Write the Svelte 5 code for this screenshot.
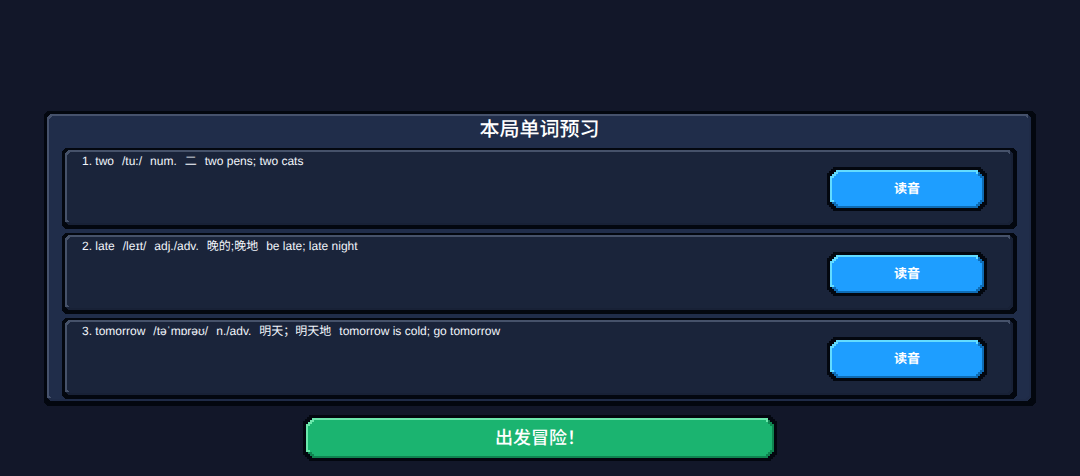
<script lang="ts">
  type Word = {
    word: string;
    ipa: string;
    pos: string;
    meaning: string;
    example: string;
  };

  let words: Word[] = [
    { word: 'two', ipa: '/tu:/', pos: 'num.', meaning: '二', example: 'two pens; two cats' },
    { word: 'late', ipa: '/leɪt/', pos: 'adj./adv.', meaning: '晚的;晚地', example: 'be late; late night' },
    { word: 'tomorrow', ipa: '/təˈmɒrəʊ/', pos: 'n./adv.', meaning: '明天；明天地', example: 'tomorrow is cold; go tomorrow' },
  ];

  let started = $state(false);

  function speak(word: string) {
    if (!('speechSynthesis' in window)) return;
    const utterance = new SpeechSynthesisUtterance(word);
    utterance.lang = 'en-US';
    window.speechSynthesis.speak(utterance);
  }
</script>

<main>
  <section class="frame panel pixel">
    <div class="edge pixel">
      <div class="face pixel">
        <h1>本局单词预习</h1>
        <ol>
          {#each words as item, i}
            <li class="frame row pixel">
              <div class="edge pixel">
                <div class="face pixel">
                  <p>
                    <span>{i + 1}. {item.word}</span>
                    <span>{item.ipa}</span>
                    <span>{item.pos}</span>
                    <span>{item.meaning}</span>
                    <span>{item.example}</span>
                  </p>
                  <button class="frame speak pixel" onclick={() => speak(item.word)}>
                    <span class="edge pixel"><span class="face pixel">读音</span></span>
                  </button>
                </div>
              </div>
            </li>
          {/each}
        </ol>
      </div>
    </div>
  </section>

  <button class="frame start pixel" disabled={started} onclick={() => (started = true)}>
    <span class="edge pixel"><span class="face pixel">出发冒险！</span></span>
  </button>
</main>

<style>
  :global(body) {
    background: #121729;
  }

  main {
    display: flex;
    flex-direction: column;
    align-items: center;
    gap: 9px;
    padding: 111px 44px 15px;
    color: #f1f5fb;
    font-family: "Liberation Sans", "Noto Sans CJK SC", sans-serif;
    text-rendering: geometricPrecision;
  }

  /* corners cut in three square steps */
  .pixel {
    --a: var(--step);
    --b: calc(var(--step) * 2);
    --c: calc(var(--step) * 3);
    clip-path: polygon(
      0 var(--c), var(--a) var(--c), var(--a) var(--b), var(--b) var(--b), var(--b) var(--a), var(--c) var(--a), var(--c) 0,
      calc(100% - var(--c)) 0, calc(100% - var(--c)) var(--a), calc(100% - var(--b)) var(--a), calc(100% - var(--b)) var(--b),
      calc(100% - var(--a)) var(--b), calc(100% - var(--a)) var(--c), 100% var(--c),
      100% calc(100% - var(--c)), calc(100% - var(--a)) calc(100% - var(--c)), calc(100% - var(--a)) calc(100% - var(--b)),
      calc(100% - var(--b)) calc(100% - var(--b)), calc(100% - var(--b)) calc(100% - var(--a)),
      calc(100% - var(--c)) calc(100% - var(--a)), calc(100% - var(--c)) 100%,
      var(--c) 100%, var(--c) calc(100% - var(--a)), var(--b) calc(100% - var(--a)), var(--b) calc(100% - var(--b)),
      var(--a) calc(100% - var(--b)), var(--a) calc(100% - var(--c)), 0 calc(100% - var(--c))
    );
  }

  .frame {
    box-sizing: border-box;
    background: #03070f;
  }

  /* light along the top and left, dark along the bottom and right */
  .edge {
    display: block;
    padding: 2px;
    background:
      linear-gradient(var(--light), var(--light)) 0 0 / calc(100% - var(--c)) 10px no-repeat,
      linear-gradient(var(--light), var(--light)) 0 0 / 10px calc(100% - var(--c)) no-repeat,
      var(--dark);
  }

  .face {
    display: block;
    background: var(--fill);
  }

  .panel {
    --step: 1px;
    --light: #46526c;
    --dark: #1f2b47;
    --fill: #202d4a;
    width: 100%;
    padding: 3px 5px 5px 3px;
  }

  .panel > .edge > .face {
    padding: 0 12px 0 13px;
  }

  h1 {
    margin: 0 0 4px;
    font-size: 20px;
    font-weight: 500;
    line-height: 28px;
    text-align: center;
    color: #fff;
  }

  ol {
    display: flex;
    flex-direction: column;
    gap: 4px;
    margin: 0;
    padding: 0;
    list-style: none;
  }

  .row {
    --light: #46526a;
    --dark: #182136;
    --fill: #1a243a;
    padding: 2px 4px 4px 3px;
  }

  .row > .edge > .face {
    display: flex;
    justify-content: space-between;
    align-items: flex-start;
    padding: 0 24px 0 15px;
  }

  p {
    display: flex;
    flex-wrap: wrap;
    gap: 0 8px;
    margin: 0;
    font-size: 12px;
    line-height: 18px;
  }

  button {
    flex: none;
    border: 0;
    color: #fff;
    font-family: inherit;
    text-align: center;
    text-rendering: inherit;
    cursor: pointer;
  }

  .speak {
    --step: 2px;
    --light: #63dcff;
    --dark: #0f6cb4;
    --fill: #1e9eff;
    width: 160px;
    margin: 15px 0 12px;
    padding: 3px;
    font-size: 13px;
    font-weight: 700;
    line-height: 34px;
  }

  .start {
    --step: 2px;
    --light: #6ce8ac;
    --dark: #0f8450;
    --fill: #1bb470;
    width: 474px;
    max-width: 100%;
    padding: 3px;
    font-size: 18px;
    font-weight: 500;
    line-height: 36px;
  }
</style>
